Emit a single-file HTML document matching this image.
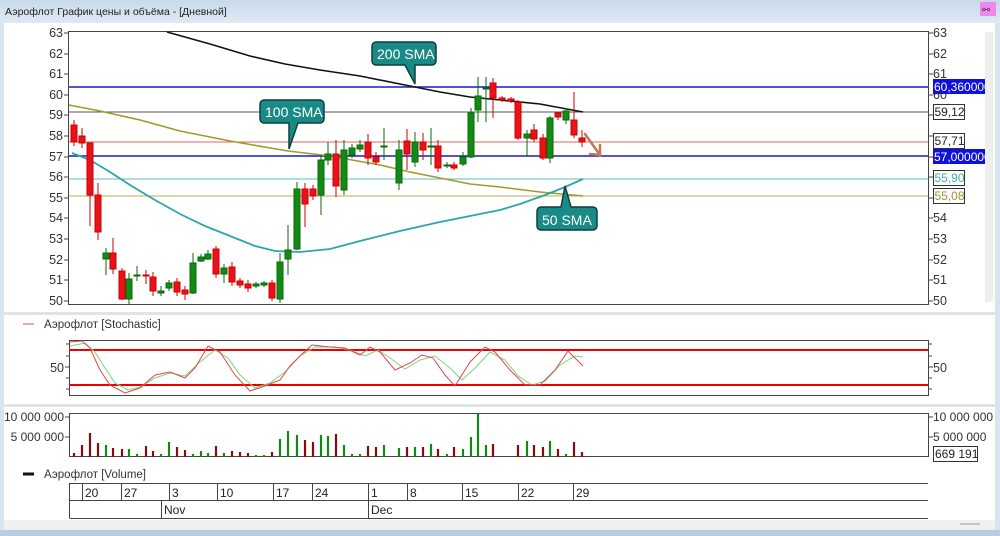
<!DOCTYPE html>
<html><head><meta charset="utf-8"><style>
html,body{margin:0;padding:0;width:1000px;height:536px;overflow:hidden;background:#d6e3f0;font-family:"Liberation Sans","Noto Sans CJK SC",sans-serif}
</style></head><body>
<svg width="1000" height="536" viewBox="0 0 1000 536" xmlns="http://www.w3.org/2000/svg" font-family="Liberation Sans, DejaVu Sans, sans-serif">
<defs><linearGradient id="tb" x1="0" y1="0" x2="0" y2="1"><stop offset="0" stop-color="#c9d9ea"/><stop offset="1" stop-color="#dfe9f4"/></linearGradient>
<clipPath id="rc"><rect x="930" y="0" width="55" height="536"/></clipPath></defs>
<rect x="0" y="0" width="1000" height="536" fill="#d8e4f0"/>
<rect x="0" y="0" width="1000" height="23" fill="url(#tb)"/>
<text x="5" y="15" font-size="10.5" fill="#222">Аэрофлот График цены и объёма - [Дневной]</text>
<rect x="980" y="2" width="16" height="14" fill="#ee88ee"/>
<text x="982" y="13" font-size="10" fill="#444">⚯</text>
<rect x="4" y="23" width="991" height="497" fill="#fff"/>
<rect x="985" y="32" width="8" height="270" fill="#eee"/>
<rect x="4" y="520" width="991" height="10" fill="#f0f0f0"/>
<rect x="0" y="530" width="1000" height="6" fill="#b9cde2"/>
<line x1="960" y1="524" x2="980" y2="524" stroke="#999"/>

<!-- main plot -->
<rect x="68.5" y="31.5" width="860" height="273" fill="none" stroke="#444"/>
<g font-size="12.5" fill="#333" text-anchor="end">
<text x="63" y="37">63</text><text x="63" y="58">62</text><text x="63" y="78">61</text><text x="63" y="99">60</text><text x="63" y="119">59</text><text x="63" y="140">58</text><text x="63" y="161">57</text><text x="63" y="181">56</text><text x="63" y="202">55</text><text x="63" y="222">54</text><text x="63" y="243">53</text><text x="63" y="264">52</text><text x="63" y="284">51</text><text x="63" y="305">50</text>
</g>
<g font-size="12.5" fill="#333">
<text x="933" y="37">63</text><text x="933" y="58">62</text><text x="933" y="78">61</text><text x="933" y="99">60</text><text x="933" y="222">54</text><text x="933" y="243">53</text><text x="933" y="264">52</text><text x="933" y="284">51</text><text x="933" y="305">50</text>
</g>
<g stroke="#444">
<path d="M64 33h4M64 54h4M64 74h4M64 95h4M64 115h4M64 136h4M64 157h4M64 177h4M64 198h4M64 218h4M64 239h4M64 260h4M64 280h4M64 301h4"/>
<path d="M929 33h4M929 54h4M929 74h4M929 95h4M929 115h4M929 136h4M929 157h4M929 177h4M929 198h4M929 218h4M929 239h4M929 260h4M929 280h4M929 301h4"/>
</g>
<line x1="69" y1="87" x2="928" y2="87" stroke="#1a1acc" stroke-width="1.6"/>
<line x1="69" y1="112" x2="928" y2="112" stroke="#555"/>
<line x1="69" y1="142" x2="928" y2="142" stroke="#d66"/>
<line x1="69" y1="156" x2="928" y2="156" stroke="#1a1acc" stroke-width="1.6"/>
<line x1="69" y1="179" x2="928" y2="179" stroke="#5bbcc0"/>
<line x1="69" y1="196" x2="928" y2="196" stroke="#b5b04a"/>
<g clip-path="url(#rc)" font-size="12">
<rect x="933" y="79" width="52" height="15" fill="#1010dd"/><text x="934" y="91" fill="#fff">60,360000</text>
<rect x="933.5" y="104.5" width="31" height="15" fill="#fff" stroke="#333"/><text x="934.5" y="116" fill="#222">59,12</text>
<rect x="933.5" y="133.5" width="31" height="15" fill="#fff" stroke="#333"/><text x="934.5" y="145" fill="#222">57,71</text>
<rect x="933" y="149" width="52" height="15" fill="#1010dd"/><text x="934" y="161" fill="#fff">57,000000</text>
<rect x="933.5" y="170.5" width="31" height="15" fill="#fff" stroke="#333"/><text x="934.5" y="182" fill="#4aaab0">55,90</text>
<rect x="933.5" y="188.5" width="31" height="15" fill="#fff" stroke="#333"/><text x="934.5" y="200" fill="#9a9530">55,08</text>
</g>

<!-- SMAs -->
<polyline fill="none" stroke="#111" stroke-width="1.6" points="167,32 210,44 250,56 285,64 320,70 360,76 415,87 440,92 470,97 500,100 540,104 583,112"/>
<polyline fill="none" stroke="#a39a2a" stroke-width="1.6" points="69,105 100,111 140,120 180,131 230,141 288,151 330,156 380,165 410,172 440,178 470,184 500,187 540,192 583,196"/>
<polyline fill="none" stroke="#2aa6ae" stroke-width="1.8" points="72,153 90,160 110,172 130,185 155,200 180,214 205,226 230,236 255,246 275,251 300,252 330,249 360,241 400,231 440,222 470,216 500,210 520,204 545,195 565,187 583,179"/>

<!-- candles -->
<g stroke-width="1">
<g stroke="#c00" fill="#e8121a">
<line x1="74" y1="120" x2="74" y2="146"/><rect x="71" y="125" width="6" height="17"/>
<line x1="82" y1="128" x2="82" y2="148"/><rect x="79" y="136" width="6" height="7"/>
<line x1="90" y1="143" x2="90" y2="226"/><rect x="87" y="143" width="6" height="52"/>
<line x1="98" y1="183" x2="98" y2="240"/><rect x="95" y="195" width="6" height="37"/>
<line x1="113" y1="238" x2="113" y2="274"/><rect x="110" y="253" width="6" height="16"/>
<line x1="122" y1="268" x2="122" y2="300"/><rect x="119" y="271" width="6" height="28"/>
<line x1="146" y1="270" x2="146" y2="284"/><rect x="143" y="275" width="6" height="1"/>
<line x1="153" y1="272" x2="153" y2="296"/><rect x="150" y="277" width="6" height="14"/>
<line x1="177" y1="278" x2="177" y2="296"/><rect x="174" y="282" width="6" height="10"/>
<line x1="185" y1="286" x2="185" y2="300"/><rect x="182" y="290" width="6" height="4"/>
<line x1="216" y1="246" x2="216" y2="278"/><rect x="213" y="249" width="6" height="25"/>
<line x1="232" y1="262" x2="232" y2="286"/><rect x="229" y="267" width="6" height="15"/>
<line x1="240" y1="278" x2="240" y2="288"/><rect x="237" y="281" width="6" height="4"/>
<line x1="248" y1="280" x2="248" y2="292"/><rect x="245" y="284" width="6" height="4"/>
<line x1="272" y1="280" x2="272" y2="301"/><rect x="269" y="283" width="6" height="15"/>
<line x1="305" y1="183" x2="305" y2="227"/><rect x="302" y="189" width="6" height="15"/>
<line x1="313" y1="185" x2="313" y2="200"/><rect x="310" y="189" width="6" height="7"/>
<line x1="336" y1="140" x2="336" y2="197"/><rect x="333" y="154" width="6" height="32"/>
<line x1="368" y1="134" x2="368" y2="165"/><rect x="365" y="142" width="6" height="16"/>
<line x1="376" y1="152" x2="376" y2="165"/><rect x="373" y="157" width="6" height="5"/>
<line x1="407" y1="129" x2="407" y2="170"/><rect x="404" y="141" width="6" height="13"/>
<line x1="423" y1="133" x2="423" y2="160"/><rect x="420" y="142" width="6" height="8"/>
<line x1="438" y1="140" x2="438" y2="172"/><rect x="435" y="146" width="6" height="22"/>
<line x1="454" y1="162" x2="454" y2="170"/><rect x="451" y="165" width="6" height="3"/>
<line x1="493" y1="78" x2="493" y2="118"/><rect x="490" y="83" width="6" height="15"/>
<line x1="502" y1="96" x2="502" y2="102"/><rect x="499" y="98" width="6" height="2"/>
<line x1="511" y1="97" x2="511" y2="103"/><rect x="508" y="99" width="6" height="2"/>
<line x1="518" y1="100" x2="518" y2="140"/><rect x="515" y="102" width="6" height="36"/>
<line x1="534" y1="124" x2="534" y2="142"/><rect x="531" y="130" width="6" height="9"/>
<line x1="543" y1="134" x2="543" y2="160"/><rect x="540" y="138" width="6" height="20"/>
<line x1="558" y1="112" x2="558" y2="120"/><rect x="555" y="113" width="6" height="4"/>
<line x1="574" y1="92" x2="574" y2="138"/><rect x="571" y="120" width="6" height="15"/>
<line x1="582" y1="130" x2="582" y2="147"/><rect x="579" y="138" width="6" height="4"/>
</g>
<g stroke="#0a6a0a" fill="#138a13">
<line x1="106" y1="248" x2="106" y2="275"/><rect x="103" y="253" width="6" height="6"/>
<line x1="129" y1="273" x2="129" y2="304"/><rect x="126" y="279" width="6" height="20"/>
<line x1="137" y1="266" x2="137" y2="281"/><rect x="134" y="275" width="6" height="1"/>
<line x1="161" y1="286" x2="161" y2="296"/><rect x="158" y="291" width="6" height="2"/>
<line x1="169" y1="280" x2="169" y2="291"/><rect x="166" y="283" width="6" height="5"/>
<line x1="193" y1="253" x2="193" y2="294"/><rect x="190" y="263" width="6" height="30"/>
<line x1="201" y1="254" x2="201" y2="262"/><rect x="198" y="257" width="6" height="4"/>
<line x1="208" y1="250" x2="208" y2="260"/><rect x="205" y="254" width="6" height="5"/>
<line x1="224" y1="264" x2="224" y2="283"/><rect x="221" y="268" width="6" height="6"/>
<line x1="256" y1="282" x2="256" y2="288"/><rect x="253" y="284" width="6" height="2"/>
<line x1="264" y1="281" x2="264" y2="287"/><rect x="261" y="283" width="6" height="2"/>
<line x1="280" y1="253" x2="280" y2="303"/><rect x="277" y="262" width="6" height="37"/>
<line x1="288" y1="225" x2="288" y2="275"/><rect x="285" y="250" width="6" height="9"/>
<line x1="297" y1="182" x2="297" y2="250"/><rect x="294" y="189" width="6" height="60"/>
<line x1="321" y1="155" x2="321" y2="215"/><rect x="318" y="160" width="6" height="35"/>
<line x1="328" y1="142" x2="328" y2="165"/><rect x="325" y="154" width="6" height="6"/>
<line x1="344" y1="140" x2="344" y2="195"/><rect x="341" y="150" width="6" height="40"/>
<line x1="352" y1="144" x2="352" y2="158"/><rect x="349" y="148" width="6" height="7"/>
<line x1="360" y1="140" x2="360" y2="152"/><rect x="357" y="145" width="6" height="4"/>
<line x1="384" y1="128" x2="384" y2="160"/><rect x="381" y="146" width="6" height="1"/>
<line x1="399" y1="140" x2="399" y2="190"/><rect x="396" y="150" width="6" height="33"/>
<line x1="415" y1="132" x2="415" y2="167"/><rect x="412" y="142" width="6" height="20"/>
<line x1="431" y1="128" x2="431" y2="165"/><rect x="428" y="146" width="6" height="1"/>
<line x1="447" y1="162" x2="447" y2="168"/><rect x="444" y="165" width="6" height="1"/>
<line x1="463" y1="152" x2="463" y2="166"/><rect x="460" y="157" width="6" height="7"/>
<line x1="471" y1="108" x2="471" y2="158"/><rect x="468" y="113" width="6" height="44"/>
<line x1="478" y1="77" x2="478" y2="122"/><rect x="475" y="96" width="6" height="14"/>
<line x1="486" y1="77" x2="486" y2="122"/><rect x="483" y="88" width="6" height="1"/>
<line x1="527" y1="130" x2="527" y2="157"/><rect x="524" y="134" width="6" height="4"/>
<line x1="550" y1="116" x2="550" y2="163"/><rect x="547" y="118" width="6" height="40"/>
<line x1="566" y1="108" x2="566" y2="124"/><rect x="563" y="111" width="6" height="9"/>
</g>
</g>
<!-- arrow -->
<g stroke="#c07850" stroke-width="2.5" fill="none" stroke-linecap="round"><path d="M585 134L600 155M590 154L600 155L600 145"/></g>

<!-- callouts -->
<g fill="#1a8a86" stroke="#0d3f3f" stroke-width="1.5">
<path d="M376 42h56a4 4 0 0 1 4 4v15a4 4 0 0 1-4 4h-17l0 19l-10-19h-29a4 4 0 0 1-4-4v-15a4 4 0 0 1 4-4z"/>
<path d="M264 100h56a4 4 0 0 1 4 4v15a4 4 0 0 1-4 4h-22l-9 26l0-26h-25a4 4 0 0 1-4-4v-15a4 4 0 0 1 4-4z"/>
<path d="M541 230h52a4 4 0 0 0 4-4v-15a4 4 0 0 0-4-4h-22l-6-21l-4 21h-20a4 4 0 0 0-4 4v15a4 4 0 0 0 4 4z"/>
</g>
<g fill="#fff" font-size="14"><text x="377" y="59">200 SMA</text><text x="265" y="117">100 SMA</text><text x="542" y="225">50 SMA</text></g>

<!-- separators -->
<rect x="4" y="312" width="991" height="3" fill="#e3e3e3"/>
<rect x="4" y="404" width="991" height="3" fill="#e3e3e3"/>

<!-- stochastic -->
<line x1="23" y1="324" x2="34" y2="324" stroke="#d55"/>
<text x="44" y="328" font-size="11.5" fill="#333">Аэрофлот [Stochastic]</text>
<rect x="69.5" y="340.5" width="859" height="55" fill="none" stroke="#444"/>
<line x1="69" y1="350" x2="928" y2="350" stroke="#e00" stroke-width="2"/>
<line x1="69" y1="385" x2="928" y2="385" stroke="#e00" stroke-width="2"/>
<text x="64" y="372" font-size="12.5" fill="#333" text-anchor="end">50</text>
<text x="933" y="372" font-size="12.5" fill="#333">50</text>
<path d="M65 367h4M929 367h4M929 344h3M929 356h3M929 378h3M929 389h3M66 344h3M66 356h3M66 378h3M66 389h3" stroke="#444"/>
<polyline fill="none" stroke="#7bd67b" points="70,346 85,343 95,352 105,368 115,383 128,390 140,387 155,378 170,373 185,376 200,362 215,350 228,358 240,375 255,388 270,383 285,372 300,356 315,347 335,347 350,350 365,356 378,350 390,358 405,369 420,360 435,356 450,368 462,380 475,368 490,352 505,360 518,376 532,385 545,381 560,365 575,356 583,357"/>
<polyline fill="none" stroke="#e04848" points="70,342 82,341 90,348 100,370 110,385 125,393 140,388 155,375 170,372 185,378 195,368 208,346 220,352 235,375 250,391 265,386 280,380 290,366 300,356 312,345 330,347 345,348 360,355 370,347 380,352 395,370 410,363 422,355 433,358 445,375 455,386 470,362 485,347 495,352 510,370 525,385 540,385 555,370 568,351 583,366"/>

<!-- volume -->
<rect x="69.5" y="413.5" width="859" height="43" fill="none" stroke="#444"/>
<g font-size="12" fill="#333"><text x="64" y="421" text-anchor="end">10 000 000</text><text x="64" y="441" text-anchor="end">5 000 000</text><text x="933" y="421">10 000 000</text><text x="933" y="441">5 000 000</text></g>
<rect x="933.5" y="446.5" width="44" height="15" fill="#fff" stroke="#333"/><text x="935" y="458" font-size="12" fill="#222">669 191</text>
<path d="M65 417h4M65 437h4M929 417h4M929 437h4" stroke="#444"/>
<g stroke-width="2.2">
<g stroke="#8a0a0a"><path d="M74 457v-4M82 457v-12M90 457v-24M98 457v-14M113 457v-9M122 457v-8M146 457v-11M153 457v-6M177 457v-10M185 457v-7M216 457v-11M232 457v-6M240 457v-5M248 457v-4M272 457v-5M305 457v-17M313 457v-15M336 457v-23M368 457v-11M376 457v-10M407 457v-10M423 457v-10M438 457v-8M454 457v-10M493 457v-13M518 457v-12M534 457v-12M543 457v-10M558 457v-8M574 457v-15M582 457v-5"/></g>
<g stroke="#128a12"><path d="M106 457v-12M129 457v-8M137 457v-3M161 457v-3M169 457v-15M193 457v-3M201 457v-6M208 457v-4M224 457v-4M256 457v-2M264 457v-2M280 457v-18M288 457v-26M297 457v-22M321 457v-22M328 457v-21M344 457v-12M352 457v-3M360 457v-3M384 457v-12M399 457v-9M415 457v-10M431 457v-13M447 457v-3M463 457v-8M471 457v-20M478 457v-44M486 457v-12M527 457v-16M550 457v-16M566 457v-3"/></g>
</g>
<line x1="23" y1="474" x2="34" y2="474" stroke="#111" stroke-width="3"/>
<text x="44" y="478" font-size="11.5" fill="#333">Аэрофлот [Volume]</text>

<!-- date axis -->
<g stroke="#444" fill="none">
<path d="M69.5 483.5H928M69.5 500.5H928M69.5 518.5H928M69.5 483v35"/>
<path d="M82.5 483v17M121.5 483v17M169.5 483v17M217.5 483v17M273.5 483v17M312.5 483v17M368.5 483v17M407.5 483v17M462.5 483v17M518.5 483v17M573.5 483v17M161.5 500v18M368.5 500v18"/>
</g>
<g font-size="12" fill="#222"><text x="85" y="497">20</text><text x="124" y="497">27</text><text x="172" y="497">3</text><text x="220" y="497">10</text><text x="276" y="497">17</text><text x="315" y="497">24</text><text x="371" y="497">1</text><text x="410" y="497">8</text><text x="465" y="497">15</text><text x="521" y="497">22</text><text x="576" y="497">29</text><text x="164" y="514">Nov</text><text x="371" y="514">Dec</text></g>
</svg>
</body></html>
